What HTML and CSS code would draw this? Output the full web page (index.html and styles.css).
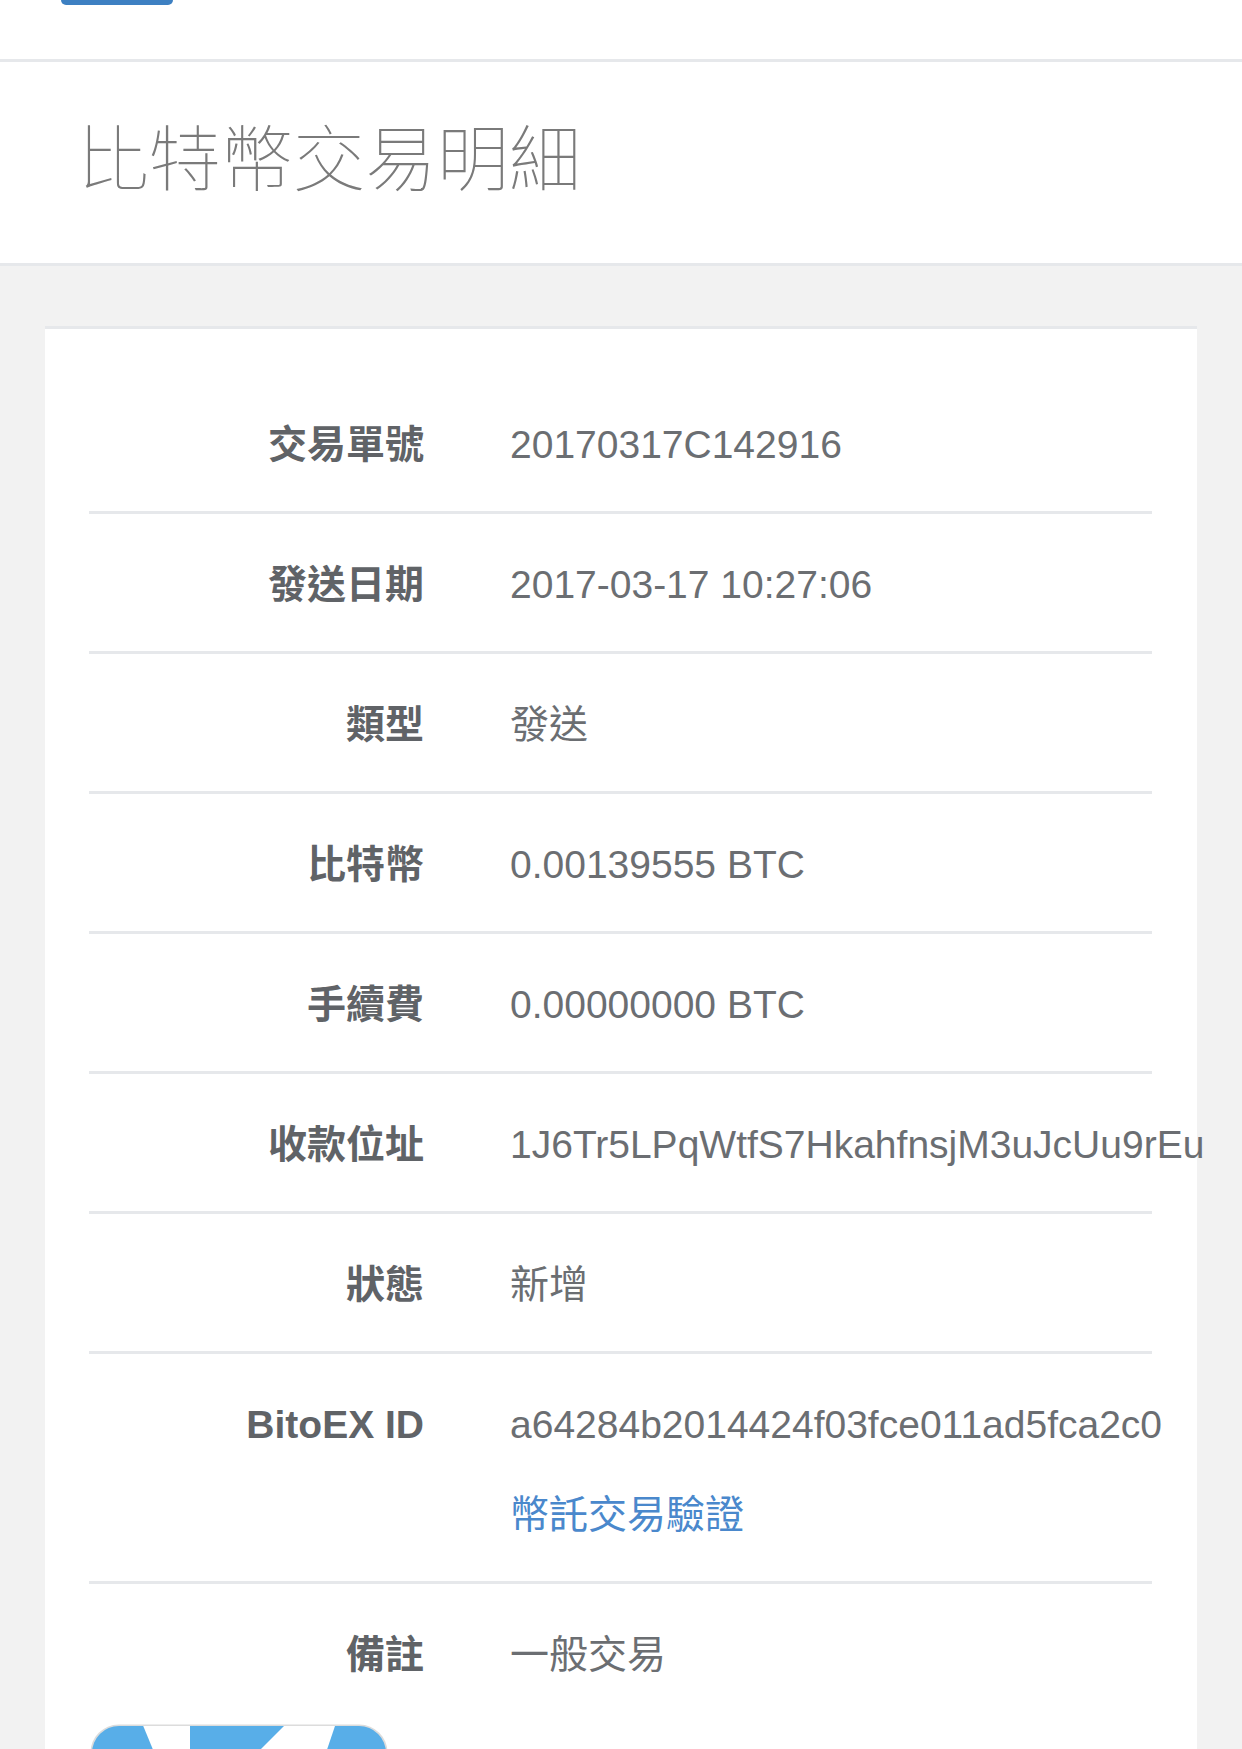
FILE: index.html
```html
<!DOCTYPE html>
<html lang="zh-Hant">
<head>
<meta charset="utf-8">
<title>比特幣交易明細</title>
<link rel="stylesheet" href="styles.css">
</head>
<body>
<header class="topbar">
  <div class="tab"></div>
</header>
<section class="title-section">
  <h1 class="title">比特幣交易明細</h1>
</section>
<main class="card">
  <div class="row">
    <div class="label">交易單號</div>
    <div class="value">20170317C142916</div>
  </div>
  <div class="row">
    <div class="label">發送日期</div>
    <div class="value">2017-03-17 10:27:06</div>
  </div>
  <div class="row">
    <div class="label">類型</div>
    <div class="value">發送</div>
  </div>
  <div class="row">
    <div class="label">比特幣</div>
    <div class="value">0.00139555 BTC</div>
  </div>
  <div class="row">
    <div class="label">手續費</div>
    <div class="value">0.00000000 BTC</div>
  </div>
  <div class="row">
    <div class="label">收款位址</div>
    <div class="value">1J6Tr5LPqWtfS7HkahfnsjM3uJcUu9rEu</div>
  </div>
  <div class="row">
    <div class="label">狀態</div>
    <div class="value">新增</div>
  </div>
  <div class="row">
    <div class="label">BitoEX ID</div>
    <div class="value">
      <div>a64284b2014424f03fce011ad5fca2c0</div>
      <a class="link" href="#">幣託交易驗證</a>
    </div>
  </div>
  <div class="row last">
    <div class="label">備註</div>
    <div class="value">一般交易</div>
  </div>
  <div class="picture">
    <svg width="300" height="120" viewBox="0 0 300 120">
      <defs>
        <clipPath id="inner">
          <rect x="3" y="3" width="294" height="200" rx="27" ry="27"/>
        </clipPath>
      </defs>
      <rect x="1.5" y="1.5" width="297" height="200" rx="28" ry="28" fill="#dcdcdc"/>
      <g clip-path="url(#inner)">
        <rect x="0" y="0" width="300" height="200" fill="#58aee8"/>
        <polygon points="53,0 101,0 101,80 86,80" fill="#ffffff"/>
        <polygon points="198,0 247,0 220,80 118,80" fill="#ffffff"/>
      </g>
    </svg>
  </div>
</main>
</body>
</html>
```

FILE: styles.css
```css
html, body {
  margin: 0;
  padding: 0;
}

body {
  background: #f2f2f2;
  font-family: "Liberation Sans", "Noto Sans CJK TC", sans-serif;
  width: 1242px;
  overflow: hidden;
}

.topbar {
  background: #ffffff;
  height: 59px;
  border-bottom: 3px solid #e6e8eb;
  padding-left: 61px;
}

.tab {
  width: 112px;
  height: 5px;
  background: #3d80c2;
  border-radius: 0 0 7px 7px;
}

.title-section {
  background: #ffffff;
  height: 201px;
  box-sizing: border-box;
  padding: 0 0 18px 77px;
  border-bottom: 3px solid #e6e8eb;
  display: flex;
  align-items: center;
  box-sizing: content-box;
  height: 183px;
}

.title {
  margin: 0;
  font-family: "Noto Sans CJK TC", sans-serif;
  font-weight: 100;
  font-size: 72px;
  line-height: 80px;
  color: #7a7a7a;
}

.card {
  display: block;
  margin: 60px 0 0 45px;
  width: 1152px;
  background: #ffffff;
  border-top: 3px solid #e6e8eb;
  padding: 45px 45px 0 44px;
  box-sizing: border-box;
}

.row {
  display: grid;
  grid-template-columns: 335px 1fr;
  column-gap: 86px;
  padding: 48px 0 44px;
  border-bottom: 3px solid #e6e8eb;
  font-size: 39px;
  line-height: 45px;
}

.row.last {
  border-bottom: none;
}

.label {
  text-align: right;
  font-weight: bold;
  color: #606367;
}

.value {
  color: #6b6e72;
  white-space: nowrap;
}

.link {
  display: block;
  margin-top: 45px;
  color: #4a88cc;
  text-decoration: none;
}

.picture {
  margin-top: 2px;
  height: 120px;
}

.picture svg {
  display: block;
}
```
